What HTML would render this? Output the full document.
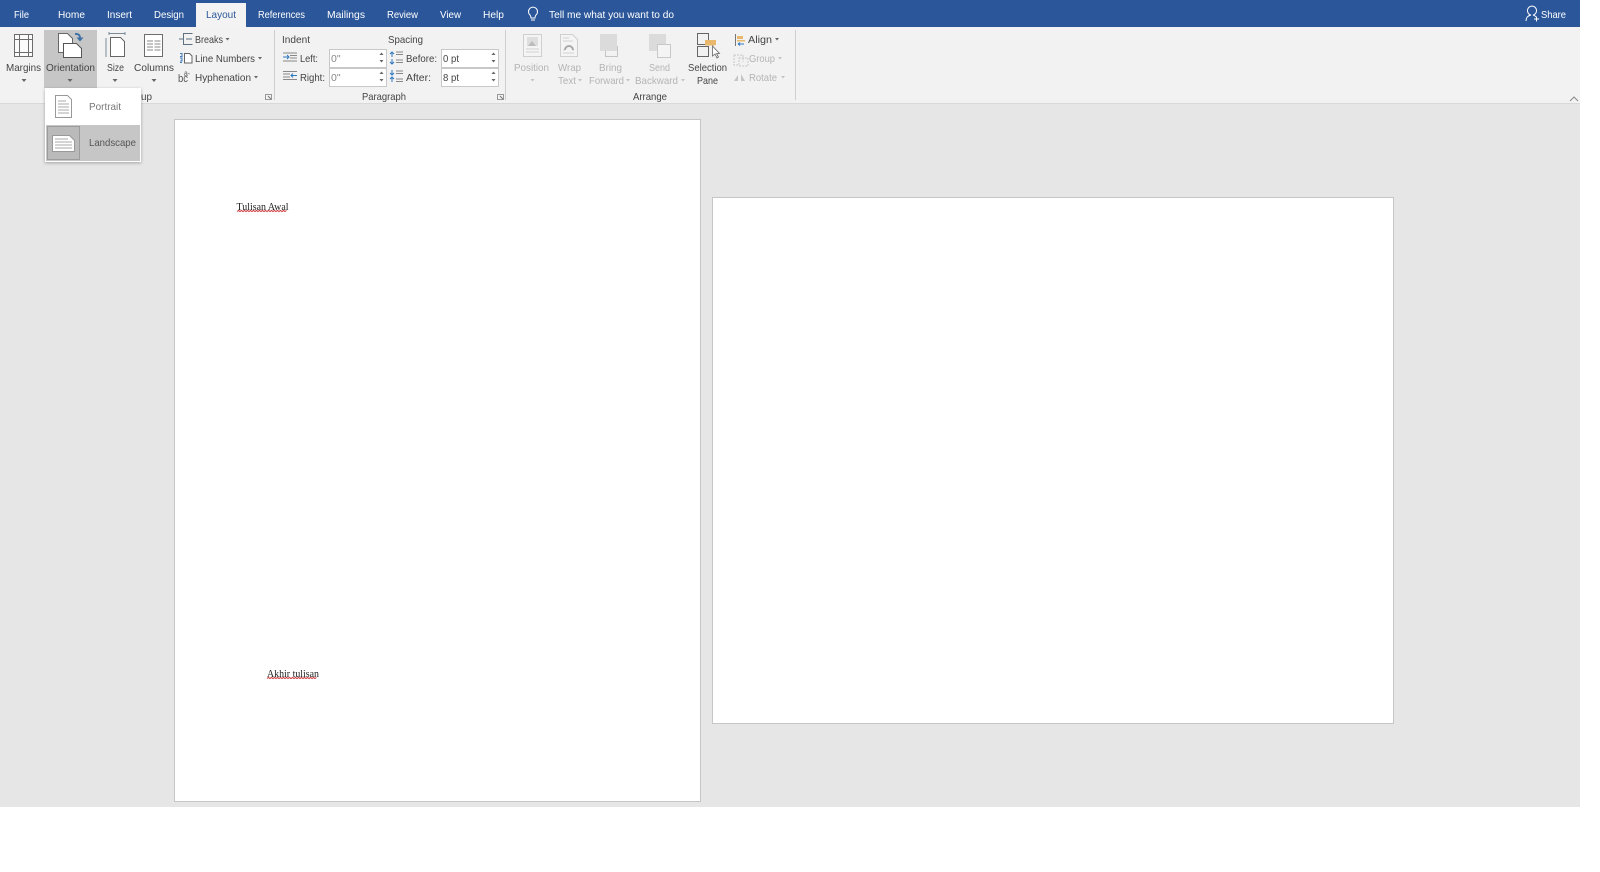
<!DOCTYPE html>
<html><head><meta charset="utf-8"><style>
html,body{margin:0;padding:0;background:#fff;width:1600px;height:872px;overflow:hidden}
svg{display:block}
text{font-family:"Liberation Sans",sans-serif;font-size:10.5px;fill:#444;transform:translateY(-1px)}
.t text{fill:#fff;font-size:10.5px}
.d text,text.d{fill:#b4b4b4}
text.ser{font-family:"Liberation Serif",serif;font-size:10.5px;fill:#222;transform:none}
</style></head><body>
<svg width="1600" height="872" viewBox="0 0 1600 872" xmlns="http://www.w3.org/2000/svg">
<defs><filter id="b" x="-5%" y="-5%" width="110%" height="110%"><feGaussianBlur stdDeviation="0.35"/></filter>
<filter id="s" x="-20%" y="-20%" width="140%" height="140%"><feDropShadow dx="0" dy="1" stdDeviation="1.5" flood-color="#000" flood-opacity=".3"/></filter></defs>
<rect width="1600" height="872" fill="#fff"/>
<rect width="1580" height="807" fill="#e6e6e6"/>
<rect y="27" width="1580" height="76" fill="#f2f2f2"/>
<rect y="103" width="1580" height="1" fill="#d9d9d9"/>
<rect width="1580" height="27" fill="#2b579a"/>
<rect x="196" y="3" width="50" height="25" fill="#f3f3f3"/>
<!-- pages -->
<rect x="174.500" y="119.500" width="526" height="682" fill="#fff" stroke="#c6c6c6"/>
<rect x="712.500" y="197.500" width="681" height="526" fill="#fff" stroke="#c6c6c6"/>
<g filter="url(#b)">
<g class="t">
<text lengthAdjust="spacingAndGlyphs" x="14" y="19" textLength="15">File</text>
<text lengthAdjust="spacingAndGlyphs" x="58" y="19" textLength="27">Home</text>
<text lengthAdjust="spacingAndGlyphs" x="107" y="19" textLength="25">Insert</text>
<text lengthAdjust="spacingAndGlyphs" x="154" y="19" textLength="30">Design</text>
<text lengthAdjust="spacingAndGlyphs" x="206" y="19" textLength="30" style="fill:#2b579a">Layout</text>
<text lengthAdjust="spacingAndGlyphs" x="258" y="19" textLength="47">References</text>
<text lengthAdjust="spacingAndGlyphs" x="327" y="19" textLength="38">Mailings</text>
<text lengthAdjust="spacingAndGlyphs" x="387" y="19" textLength="31">Review</text>
<text lengthAdjust="spacingAndGlyphs" x="440" y="19" textLength="21">View</text>
<text lengthAdjust="spacingAndGlyphs" x="483" y="19" textLength="21">Help</text>
<text lengthAdjust="spacingAndGlyphs" x="549" y="19" textLength="125">Tell me what you want to do</text>
<text lengthAdjust="spacingAndGlyphs" x="1541" y="19" textLength="25">Share</text>
</g>
<path d="M530 15a4.500 4.500 0 1 1 6 0q-1 1-1 3h-4q0-2-1-3zM531 20h4" fill="none" stroke="#fff" stroke-width="1"/>
<path d="M1526 21q0-5 5-6a4.500 4.500 0 1 1 2 0q2 .5 3 2M1534 19h5M1536.500 16.500v5" fill="none" stroke="#fff" stroke-width="1"/>

<!-- Orientation highlight -->
<rect x="44" y="30" width="53" height="58" fill="#c6c6c6"/>
<!-- Margins icon -->
<path d="M14.500 34.500h18v22h-18zM14.500 39.500h18M14.500 52.500h18M19.500 34.500v22M28.500 34.500v22" fill="#fbfbfb" stroke="#6d6d6d"/>
<!-- Orientation icon -->
<path d="M58.500 33.500h9l5 5v14h-14z" fill="#fff" stroke="#666"/>
<path d="M63.500 43.500h13l5 5v9h-18z" fill="#fff" stroke="#555"/>
<path d="M75 34q5-.5 5 4" fill="none" stroke="#3a6ea5" stroke-width="1.800"/>
<path d="M76.500 37.500h7l-3.500 4z" fill="#3a6ea5"/>
<!-- Size icon -->
<path d="M110.500 37.500h10l4 4v15h-14z" fill="#fff" stroke="#666"/>
<path d="M109 33.500h16M109 32v3M125 32v3M106 38v19" fill="none" stroke="#7a8a99"/>
<!-- Columns icon -->
<path d="M144.500 34.500h18v22h-18z" fill="#fff" stroke="#6d6d6d"/>
<path d="M147 41h6M154.500 41h6M147 44h6M154.500 44h6M147 47h6M154.500 47h6M147 50h6M154.500 50h6" stroke="#888"/>
<text lengthAdjust="spacingAndGlyphs" x="6" y="72" textLength="35">Margins</text>
<text lengthAdjust="spacingAndGlyphs" x="46" y="72" textLength="49">Orientation</text>
<text lengthAdjust="spacingAndGlyphs" x="107" y="72" textLength="17">Size</text>
<text lengthAdjust="spacingAndGlyphs" x="134" y="72" textLength="40">Columns</text>
<path d="M21.500 79h5l-2.500 3zM67.500 79h5l-2.500 3zM112.500 79h5l-2.500 3zM151.500 79h5l-2.500 3z" fill="#666"/>
<!-- breaks group -->
<path d="M183.500 33v12M183.500 33.500h9M183.500 44.500h9M179 39h4M186 39h6" fill="none" stroke="#5f6f80"/>
<path d="M184.500 53.500h5l2.500 2.500v7h-7.500z" fill="#fff" stroke="#666"/>
<path d="M180 53.500h2v3h-2M180 58h2v3h-2M180 62.500h2" fill="none" stroke="#3f7cb8"/>
<text lengthAdjust="spacingAndGlyphs" x="178" y="83" textLength="10" style="font-size:11px;fill:#555">bc</text><text lengthAdjust="spacingAndGlyphs" x="184" y="77" textLength="6" style="font-size:8px;fill:#555">a-</text>
<text lengthAdjust="spacingAndGlyphs" x="195" y="44" textLength="28">Breaks</text>
<text lengthAdjust="spacingAndGlyphs" x="195" y="63" textLength="60">Line Numbers</text>
<text lengthAdjust="spacingAndGlyphs" x="195" y="82" textLength="56">Hyphenation</text>
<path d="M225.500 38h4l-2 2.500zM258 57h4l-2 2.500zM254 76h4l-2 2.500z" fill="#666"/>
<text lengthAdjust="spacingAndGlyphs" x="141" y="101" textLength="11">up</text>
<path d="M265.500 94.500h6v5h-6z" fill="none" stroke="#999"/><path d="M268 96l3 3" stroke="#777"/>
<path d="M274.500 30v70M505.500 30v70M795.500 30v70" stroke="#cfcfcf"/>

<!-- paragraph -->
<text lengthAdjust="spacingAndGlyphs" x="282" y="44" textLength="28">Indent</text>
<text lengthAdjust="spacingAndGlyphs" x="388" y="44" textLength="35">Spacing</text>
<path d="M283 53h14M290 55.500h7M290 58h7M283 61h14" stroke="#888" fill="none"/>
<path d="M283 57h6M287 55l2 2-2 2" stroke="#2f78c0" fill="none"/>
<path d="M283 71.500h14M283 74h7M283 77h7M283 79.500h14" stroke="#888" fill="none"/>
<path d="M291 75.500h6M293 73.500l-2 2 2 2" stroke="#2f78c0" fill="none"/>
<text lengthAdjust="spacingAndGlyphs" x="300" y="63" textLength="18">Left:</text>
<text lengthAdjust="spacingAndGlyphs" x="300" y="82" textLength="25">Right:</text>
<g fill="#fff" stroke="#c8c8c8"><rect x="329.500" y="49.500" width="57" height="18"/><rect x="329.500" y="68.500" width="57" height="18"/><rect x="441.500" y="49.500" width="57" height="18"/><rect x="441.500" y="68.500" width="57" height="18"/></g>
<text x="331" y="63" class="d" style="fill:#888">0"</text>
<text x="331" y="82" class="d" style="fill:#888">0"</text>
<text lengthAdjust="spacingAndGlyphs" x="443" y="63" textLength="16">0 pt</text>
<text lengthAdjust="spacingAndGlyphs" x="443" y="82" textLength="16">8 pt</text>
<path d="M379.500 55h4l-2-2.500zM379.500 60h4l-2 2.500zM379.500 74h4l-2-2.500zM379.500 79h4l-2 2.500zM491.500 55h4l-2-2.500zM491.500 60h4l-2 2.500zM491.500 74h4l-2-2.500zM491.500 79h4l-2 2.500z" fill="#666"/>
<path d="M392 52v5M390 54l2-2 2 2M392 59v5M390 62l2 2 2-2M392 70v5M390 73l2 2 2-2M392 77v5M390 79l2-2 2 2" stroke="#2f78c0" fill="none"/>
<path d="M396 52h7M396 54.500h7M396 60h7M396 62.500h7M396 71h7M396 73.500h7M396 79h7M396 81.500h7" stroke="#888"/>
<text lengthAdjust="spacingAndGlyphs" x="406" y="63" textLength="31">Before:</text>
<text lengthAdjust="spacingAndGlyphs" x="406" y="82" textLength="25">After:</text>
<text lengthAdjust="spacingAndGlyphs" x="362" y="101" textLength="44">Paragraph</text>
<path d="M497.500 94.500h6v5h-6z" fill="none" stroke="#999"/><path d="M500 96l3 3" stroke="#777"/>

<!-- arrange -->
<rect x="523.500" y="34.500" width="18" height="22" fill="#f4f4f4" stroke="#cfcfcf"/>
<rect x="527" y="37" width="11" height="9" fill="#dedede"/><path d="M528 46l4-5 4 5z" fill="#bbb"/><path d="M526 49h13M526 52h13" stroke="#d2d2d2"/>
<path d="M560.500 34.500h12l5 5v17h-17z" fill="#f4f4f4" stroke="#cfcfcf"/>
<path d="M563 38h6M563 41h10M563 53h11M563 50h2M572 50h2" stroke="#d2d2d2"/><path d="M565 50a4 4 0 0 1 8 0" fill="none" stroke="#aaa" stroke-width="2"/>
<rect x="600" y="34" width="17" height="17" fill="#dbdbdb"/><path d="M617.500 46v10.500h-12V51" fill="none" stroke="#c4c4c4"/>
<rect x="649" y="34" width="17" height="17" fill="#dbdbdb"/><rect x="657.500" y="44.500" width="13" height="13" fill="#f4f4f4" stroke="#c8c8c8"/>
<path d="M697.500 33.500h11v11h-11zM697.500 46.500h11v10h-11z" fill="none" stroke="#666"/>
<path d="M705 40h11v5l-3 .5h-8z" fill="#e8b86c"/>
<path d="M712.500 46v10l2.500-2 2 4 1.500-1-2-3.500h3z" fill="#fff" stroke="#666" stroke-width=".8"/>
<g class="d">
<text lengthAdjust="spacingAndGlyphs" x="514" y="72" textLength="35">Position</text>
<text lengthAdjust="spacingAndGlyphs" x="558" y="72" textLength="23">Wrap</text>
<text lengthAdjust="spacingAndGlyphs" x="558" y="85" textLength="18">Text</text>
<text lengthAdjust="spacingAndGlyphs" x="599" y="72" textLength="23">Bring</text>
<text lengthAdjust="spacingAndGlyphs" x="589" y="85" textLength="35">Forward</text>
<text lengthAdjust="spacingAndGlyphs" x="649" y="72" textLength="21">Send</text>
<text lengthAdjust="spacingAndGlyphs" x="635" y="85" textLength="43">Backward</text>
<text lengthAdjust="spacingAndGlyphs" x="749" y="63" textLength="26">Group</text>
<text lengthAdjust="spacingAndGlyphs" x="749" y="82" textLength="28">Rotate</text>
</g>
<path d="M530.500 79h4l-2 2.500zM578 79h4l-2 2.500zM626 79h4l-2 2.500zM681 79h4l-2 2.500zM778 57h4l-2 2.500zM781 76h4l-2 2.500z" fill="#c4c4c4"/>
<text lengthAdjust="spacingAndGlyphs" x="688" y="72" textLength="39">Selection</text>
<text lengthAdjust="spacingAndGlyphs" x="697" y="85" textLength="21">Pane</text>
<text lengthAdjust="spacingAndGlyphs" x="748" y="44" textLength="24">Align</text>
<path d="M775 38h4l-2 2.500z" fill="#666"/>
<path d="M735.500 34v12" stroke="#777"/><rect x="737" y="36" width="6" height="3" fill="#e8b86c"/><rect x="737" y="40" width="8" height="1.500" fill="#e8b86c"/><path d="M738 44h6M738 44l2-1.500M738 44l2 1.500" stroke="#2f78c0" fill="none"/>
<path d="M734 55h9v7M734 55v10h5M739 58h9v8h-9z" fill="none" stroke="#c8c8c8" stroke-dasharray="2 1"/>
<path d="M734 81l4-6v6zM741 81v-7l4 7z" fill="#c4c4c4"/>
<text lengthAdjust="spacingAndGlyphs" x="633" y="101" textLength="34">Arrange</text>
<path d="M1570 101l4-4 4 4" fill="none" stroke="#888"/>

<!-- page text -->
<text class="ser" lengthAdjust="spacingAndGlyphs" x="236.500" y="210" textLength="52">Tulisan Awal</text>
<text class="ser" lengthAdjust="spacingAndGlyphs" x="267" y="677" textLength="52">Akhir tulisan</text>
<path d="M237 211.500l1.500-1 1.500 1 1.500-1 1.500 1 1.500-1 1.500 1 1.500-1 1.500 1 1.500-1 1.500 1 1.500-1 1.500 1 1.500-1 1.500 1 1.500-1 1.500 1 1.500-1 1.500 1 1.500-1 1.500 1 1.500-1 1.500 1 1.500-1 1.500 1 1.500-1 1.500 1 1.500-1 1.500 1 1.500-1 1.500 1 1.500-1 1.500 1 1.500-1" fill="none" stroke="#c33" stroke-width="1"/>
<path d="M267 678.500l1.500-1 1.500 1 1.500-1 1.500 1 1.500-1 1.500 1 1.500-1 1.500 1 1.500-1 1.500 1 1.500-1 1.500 1 1.500-1 1.500 1 1.500-1 1.500 1 1.500-1 1.500 1 1.500-1 1.500 1 1.500-1 1.500 1 1.500-1 1.500 1 1.500-1 1.500 1 1.500-1 1.500 1 1.500-1 1.500 1 1.500-1 1.500 1 1.500-1" fill="none" stroke="#c33" stroke-width="1"/>

<!-- dropdown -->
<rect x="45" y="88" width="96" height="74" fill="#fff" filter="url(#s)"/>
<rect x="46" y="125" width="94" height="36" fill="#c6c6c6"/>
<rect x="47.500" y="126.500" width="32" height="33" fill="#bababa" stroke="#9c9c9c"/>
<path d="M55.500 95.500h12l4 4v18h-16z" fill="#fff" stroke="#999"/>
<path d="M58 101h8M58 104h11M58 107h11M58 110h11M58 113h11" stroke="#aaa"/>
<path d="M52.500 135.500h17l5 5v11h-22z" fill="#fff" stroke="#999"/>
<path d="M55 139h13M55 142h17M55 145h17M55 148h17" stroke="#aaa"/>
<text lengthAdjust="spacingAndGlyphs" x="89" y="111" textLength="32" style="fill:#777">Portrait</text>
<text lengthAdjust="spacingAndGlyphs" x="89" y="147" textLength="47" style="fill:#555">Landscape</text>
</g>
</svg>
</body></html>
